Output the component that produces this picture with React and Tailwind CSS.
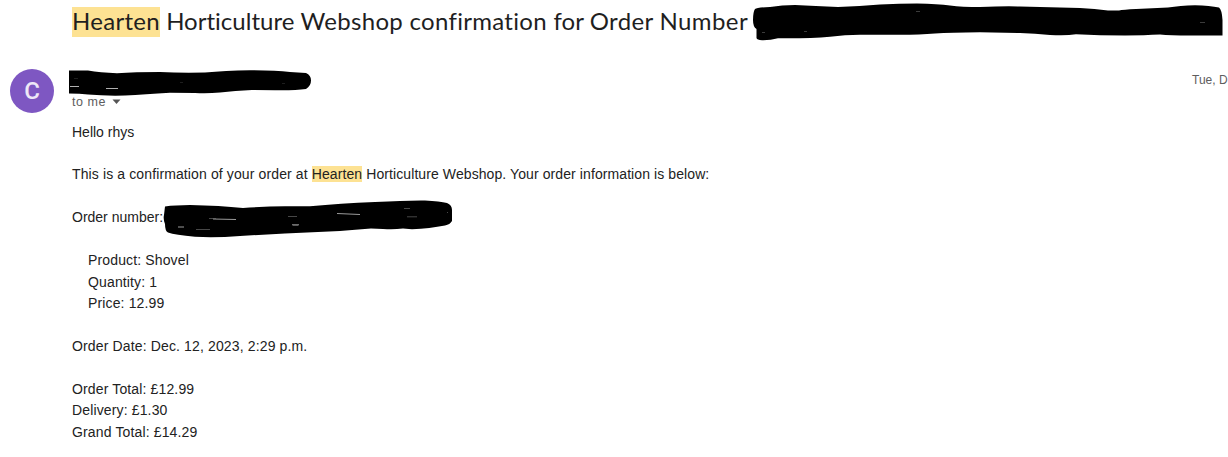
const body = "font-['Liberation_Sans',Arial,sans-serif]";

function Mark({ children, className = '' }) {
  return <mark className={`bg-[#fde293] text-inherit ${className}`}>{children}</mark>;
}

function Line({ children, className = '' }) {
  return <p className={`h-[21.45px] whitespace-nowrap ${className}`}>{children}</p>;
}

function SubjectMarker() {
  return (
    <svg className="absolute left-[748px] top-0" width="480" height="44" viewBox="748 0 480 44" aria-hidden="true">
      <path d="M755 9Q757 7.5 770 7Q782 5 795 5Q815 6 838 7Q860 6 880 4.5Q900 3.500 917 3.500Q938 4 950 5.500Q962 7 980 7Q1005 6 1020 6.500L1080 8Q1095 8.500 1108 10.500L1119 10.500Q1123 9.500 1136 9L1168 7.500Q1180 5.500 1195 5.200Q1210 5.500 1219 7.500Q1222 10 1222.500 20V35.500H1190Q1170 35.500 1160 34.500Q1145 35.300 1125 35.500Q1100 35.500 1076 34.300Q1066 36 1050 35Q1035 33.500 1020 33L980 32.300Q950 32.500 935 33.500Q920 34.800 900 34.800H860Q845 35 830 36.700Q810 38.500 778 38.200Q770 40.500 762 40.300Q757 40 756.500 38V29Q753 27 753 20Q753 12 755 9Z" fill="#000" />
      <path d="M762 32.500h3M804 31.500h3M916 11.500h4M1200 22.500h5" stroke="#555" strokeWidth=".7" />
    </svg>
  );
}

function SenderMarker() {
  return (
    <svg className="absolute left-[66px] top-[66px]" width="250" height="34" viewBox="66 66 250 34" aria-hidden="true">
      <path d="M69 70.500H88Q100 72.500 117 73.200Q135 72 160 72Q180 73 205 72.500Q225 70.500 250 70.200Q275 70.300 290 72L306 73Q311 75 311 80.500Q311 86 306 89Q295 90.500 275 90.200L252 90Q235 90.500 220 92.500Q207 93.800 195 93L170 92.700Q145 94.500 125 95.500Q105 96 88 94.500Q80 93.500 69 93.500Z" fill="#000" />
      <path d="M70 86.500h9M106 88.500h12" stroke="#ddd" strokeWidth=".8" />
      <path d="M74 78.500h4M180 82.500h3M282 83.500h3" stroke="#333" strokeWidth=".6" />
    </svg>
  );
}

function OrderMarker() {
  return (
    <svg className="absolute left-[160px] top-[198px]" width="296" height="42" viewBox="160 198 296 42" aria-hidden="true">
      <path d="M165 206.500Q175 205 190 205Q220 205.500 243 208Q265 206.500 285 206.300H310Q340 203.500 375 202Q405 200.200 425 200.400Q440 201 447 203Q452 205 452 210V221Q450 224.500 445 225.500Q430 228.500 412 229.300L403 228.600Q393 229.800 383 229L371 228.500Q355 229.500 340 231L285 233.500L240 236Q215 238 195 236.800Q175 235 168 232.500Q165 231 165 224Q163 219 164 215Z" fill="#000" />
      <path d="M213 219l23 .5M178 227h6M292 224.800h7M337 213.500l23 1" stroke="#ddd" strokeWidth=".7" />
      <path d="M209 218.500h7M196 229.500h14M288 216.500h9M293 225.500h5M404 208.500h6M407 216.800h10M447 212.500h1" stroke="#777" strokeWidth=".6" />
    </svg>
  );
}

export default function App() {
  return (
    <main className="relative h-[457px] w-full overflow-hidden bg-white text-[#222]">
      <h1 className="flex h-[44px] items-start pl-[72px] pt-[7px] font-[Lato,sans-serif] text-[24px] leading-[28px] tracking-[0.3px] whitespace-pre text-[#1f1f1f]">
        <Mark className="h-[30px] w-[88px]">Hearten</Mark>
        <span><span className="tracking-[0.01px]"> Horticulture </span><span className="tracking-[0.3px]">Webshop </span>confirmation <span className="tracking-[0.08px]">for </span><span className="tracking-[0.35px]">Order </span><span className="tracking-[0.4px]">Number</span></span>
      </h1>
      <header className={`flex h-[77.5px] pl-[10px] pt-[25px] ${body}`}>
        <div className="flex size-[44px] shrink-0 items-center justify-center rounded-full bg-[#7e57c2] font-[Roboto,sans-serif] text-[24px] font-medium text-[#eee8f7]">C</div>
        <div className="ml-[18px] flex grow items-start pt-[25px] text-[12.5px] leading-[16px] tracking-[0.55px] text-[#5e5e5e]">
          <span>to me</span>
          <svg className="ml-[6px] mt-[5px]" width="9" height="6" viewBox="0 0 9 6" aria-hidden="true"><path d="M.5.500h8l-4 4.500z" fill="#555" /></svg>
        </div>
        <time className="w-[36px] shrink-0 pt-[2.5px] text-[12px] leading-[16px] whitespace-nowrap text-[#5e5e5e]">Tue, D</time>
      </header>
      <section className={`pl-[72px] text-[14px] leading-[21.45px] tracking-[0.14px] ${body}`}>
        <Line className="tracking-[0px]">Hello rhys</Line>
        <Line className="mt-[21.45px] tracking-[0.09px]"><span className="tracking-[0.12px]">This is a confirmation of your order at </span><Mark>Hearten</Mark> Horticulture Webshop. Your order information is below:</Line>
        <Line className="mt-[21.45px] tracking-[0px]">Order number:</Line>
        <div className="mt-[21.45px] pl-[16px]">
          <Line>Product: Shovel</Line>
          <Line>Quantity: 1</Line>
          <Line>Price: 12.99</Line>
        </div>
        <Line className="mt-[21.45px]">Order Date: Dec. 12, 2023, 2:29 p.m.</Line>
        <div className="mt-[21.45px]">
          <Line>Order Total: £12.99</Line>
          <Line>Delivery: £1.30</Line>
          <Line>Grand Total: £14.29</Line>
        </div>
      </section>
      <SubjectMarker />
      <SenderMarker />
      <OrderMarker />
    </main>
  );
}
